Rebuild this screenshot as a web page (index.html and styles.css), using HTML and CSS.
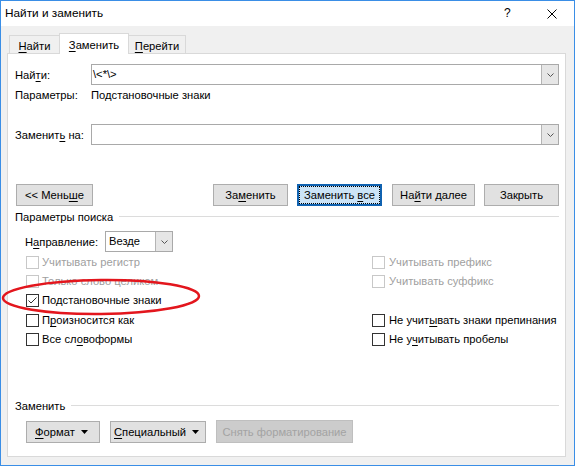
FILE: index.html
```html
<!DOCTYPE html>
<html lang="ru">
<head>
<meta charset="utf-8">
<title>Найти и заменить</title>
<link rel="stylesheet" href="styles.css">
</head>
<body>
<div class="window">
  <div class="titlebar">
    <span class="title">Найти и заменить</span>
    <span class="help">?</span>
    <span class="close"><svg width="10" height="10" viewBox="0 0 10 10"><path d="M0.5 0.5L9.5 9.5M9.5 0.5L0.5 9.5" stroke="#000" stroke-width="1" fill="none"/></svg></span>
  </div>
  <div class="client">
    <div class="tabs">
      <div class="tab tab-find"><u>Н</u>айти</div>
      <div class="tab tab-replace active"><u>З</u>аменить</div>
      <div class="tab tab-goto"><u>П</u>ерейти</div>
    </div>
    <div class="panel">
      <div class="field-row find-row">
        <span class="field-label">Най<u>т</u>и:</span>
        <div class="combo wide">
          <span class="combo-value">\&lt;*\&gt;</span>
          <span class="combo-drop"><svg width="7" height="4" viewBox="0 0 7 4"><path d="M0.5 0.5L3.5 3.5L6.5 0.5" stroke="#555" stroke-width="1" fill="none"/></svg></span>
        </div>
      </div>
      <div class="params-row">
        <span class="field-label">Параметры:</span>
        <span class="params-value">Подстановочные знаки</span>
      </div>
      <div class="field-row replace-row">
        <span class="field-label">Заменит<u>ь</u> на:</span>
        <div class="combo wide">
          <span class="combo-value"></span>
          <span class="combo-drop"><svg width="7" height="4" viewBox="0 0 7 4"><path d="M0.5 0.5L3.5 3.5L6.5 0.5" stroke="#555" stroke-width="1" fill="none"/></svg></span>
        </div>
      </div>
      <div class="button-row">
        <button class="btn btn-less">&lt;&lt; Мень<u>ш</u>е</button>
        <button class="btn btn-replace">За<u>м</u>енить</button>
        <button class="btn btn-replace-all">Заменить <u>в</u>се</button>
        <button class="btn btn-next">На<u>й</u>ти далее</button>
        <button class="btn btn-close">Закрыть</button>
      </div>
      <div class="group-header search-header">
        <span>Параметры поиска</span><span class="rule"></span>
      </div>
      <div class="direction-row">
        <span class="dir-label">Н<u>а</u>правление:</span>
        <div class="combo select">
          <span class="combo-value select-value">Везде</span>
          <span class="combo-drop"><svg width="7" height="4" viewBox="0 0 7 4"><path d="M0.5 0.5L3.5 3.5L6.5 0.5" stroke="#555" stroke-width="1" fill="none"/></svg></span>
        </div>
      </div>
      <div class="options">
        <div class="check disabled"><span class="box"></span><span class="check-text">Учитывать регистр</span></div>
        <div class="check right disabled"><span class="box"></span><span class="check-text">Учитывать префикс</span></div>
        <div class="check disabled"><span class="box"></span><span class="check-text">Только слово целиком</span></div>
        <div class="check right disabled"><span class="box"></span><span class="check-text">Учитывать суффикс</span></div>
        <div class="check"><span class="box"><svg width="11" height="11" viewBox="0 0 11 11"><path d="M1.5 5.5L4 8L9.5 2.5" stroke="#333" stroke-width="1" fill="none"/></svg></span><span class="check-text">Подстановочные знаки</span></div>
        <div class="check right empty"></div>
        <div class="check"><span class="box"></span><span class="check-text">П<u>р</u>оизносится как</span></div>
        <div class="check right"><span class="box"></span><span class="check-text">Не учит<u>ы</u>вать знаки препинания</span></div>
        <div class="check"><span class="box"></span><span class="check-text">Все сл<u>о</u>воформы</span></div>
        <div class="check right"><span class="box"></span><span class="check-text">Не у<u>ч</u>итывать пробелы</span></div>
      </div>
      <div class="bottom-group">
        <div class="group-header bottom-header">
          <span>Заменить</span><span class="rule"></span>
        </div>
        <div class="bottom-buttons">
          <button class="btn btn-menu btn-format"><span><u>Ф</u>ормат</span><svg class="arrow" width="7" height="4" viewBox="0 0 7 4"><path d="M0 0H7L3.5 4Z" fill="#000"/></svg></button>
          <button class="btn btn-menu btn-special"><span><u>С</u>пециальный</span><svg class="arrow" width="7" height="4" viewBox="0 0 7 4"><path d="M0 0H7L3.5 4Z" fill="#000"/></svg></button>
          <button class="btn btn-clear" disabled>Снять форматирование</button>
        </div>
      </div>
    </div>
  </div>
  <svg class="annotation" width="575" height="466" viewBox="0 0 575 466"><ellipse cx="101" cy="297" rx="98" ry="17" transform="rotate(-0.6 101 297)" fill="none" stroke="#e3161d" stroke-width="2.5"/></svg>
</div>
</body>
</html>
```

FILE: styles.css
```css
* { box-sizing: border-box; }
html, body { margin: 0; padding: 0; }
body {
  width: 575px;
  height: 466px;
  overflow: hidden;
  background: #fff;
  font-family: "Liberation Sans", Arial, sans-serif;
  font-size: 11.2px;
  line-height: 16px;
  color: #000;
  white-space: nowrap;
}
u { text-decoration-thickness: 1px; text-underline-offset: 2px; }

.window {
  position: relative;
  width: 575px;
  height: 466px;
  border: 1px solid #3a8ee6;
  background: #f0f0f0;
  display: flex;
  flex-direction: column;
}

.titlebar {
  height: 25px;
  flex: none;
  background: #fff;
  display: flex;
  align-items: flex-start;
  padding: 4px 0 0 4px;
}
.title { flex: 1; font-size: 11.8px; }
.help { width: 6px; margin-right: 37px; text-align: center; font-size: 12px; }
.close { width: 10px; height: 10px; margin: 4px 17px 0 0; display: flex; }

.client {
  flex: 1;
  display: flex;
  flex-direction: column;
  padding: 7px 8px 8px 6px;
}

.tabs { display: flex; height: 20px; flex: none; padding-left: 2px; }
.tab {
  height: 18px;
  margin-top: 2px;
  padding-top: 2px;
  border: 1px solid #d9d9d9;
  border-bottom: none;
  background: #f0f0f0;
  text-align: center;
}
.tab-find { width: 51px; }
.tab-replace { width: 70px; margin-left: -1px; }
.tab-goto { width: 58px; margin-left: -1px; }
.tab.active {
  position: relative;
  z-index: 1;
  height: 21px;
  margin-top: 0;
  padding-top: 3px;
  background: #fff;
}

.panel {
  flex: 1;
  background: #fff;
  border: 1px solid #d9d9d9;
  display: flex;
  flex-direction: column;
  padding: 0 6px 13px 0;
}

.field-row { display: flex; align-items: center; height: 21px; padding-left: 7px; }
.find-row { margin-top: 10px; }
.replace-row { margin-top: 21px; }
.field-label { width: 76px; flex: none; }

.combo { height: 21px; border: 1px solid #a9a9a9; background: #fff; display: flex; }
.combo.wide { flex: 1; }
.combo-value { flex: 1; padding-left: 1px; line-height: 19px; }
.combo-drop {
  width: 17px;
  flex: none;
  border-left: 1px solid #b4b4b4;
  background: #e6e6e6;
  display: flex;
  align-items: center;
  justify-content: center;
}

.params-row { display: flex; height: 16px; margin-top: 2px; padding-left: 7px; }

.button-row { display: flex; height: 22px; margin-top: 39px; padding-left: 8px; }
.btn {
  height: 22px;
  padding: 0;
  border: 1px solid #adadad;
  background: #e1e1e1;
  color: #000;
  font: inherit;
  line-height: 16px;
  white-space: nowrap;
}
.btn-less { width: 77px; }
.btn-replace { width: 75px; margin-left: auto; }
.btn-replace-all {
  width: 85px;
  margin-left: 9px;
  border: 2px solid #1062b0;
  background: #cce4f7;
  outline: 1px dotted #000;
  outline-offset: -3px;
}
.btn-next { width: 83px; margin-left: 10px; }
.btn-close { width: 75px; margin-left: 9px; }

.group-header { display: flex; align-items: flex-start; height: 16px; padding-left: 7px; }
.rule { flex: 1; height: 1px; margin: 7px 0 0 6px; background: #dcdcdc; }
.search-header { margin-top: 3px; }

.direction-row { display: flex; align-items: center; height: 21px; margin-top: 6px; padding-left: 17px; }
.dir-label { width: 80px; flex: none; }
.combo.select { width: 68px; }
.select-value { padding-left: 3px; }

.options {
  display: grid;
  grid-template-columns: 346px 1fr;
  grid-template-rows: 19px 19px 20px 19px 19px;
  margin-top: 1px;
  padding-left: 18px;
}
.check { display: flex; align-items: flex-start; }
.box {
  width: 13px;
  height: 13px;
  flex: none;
  margin: 3px 3px 0 0;
  border: 1px solid #333;
  background: #fff;
  display: flex;
}
.check.right .box { margin-right: 4px; }
.check-text { margin-top: 1px; }
.check.disabled { color: #a0a0a0; }
.check.disabled .box { border-color: #c8c8c8; }

.bottom-group { margin-top: auto; }
.bottom-buttons { display: flex; align-items: flex-end; height: 23px; margin-top: 6px; padding-left: 18px; }
.btn-menu { display: flex; align-items: center; }
.btn-menu .arrow { margin-left: auto; }
.btn-format { width: 74px; padding: 0 11px 0 8px; }
.btn-special { width: 96px; margin-left: 10px; padding: 0 6px 0 3px; }
.btn-clear {
  width: 137px;
  height: 23px;
  margin-left: 10px;
  background: #cccccc;
  border-color: #bfbfbf;
  color: #a3a3a3;
}

.annotation { position: absolute; left: -1px; top: -1px; pointer-events: none; }
```
